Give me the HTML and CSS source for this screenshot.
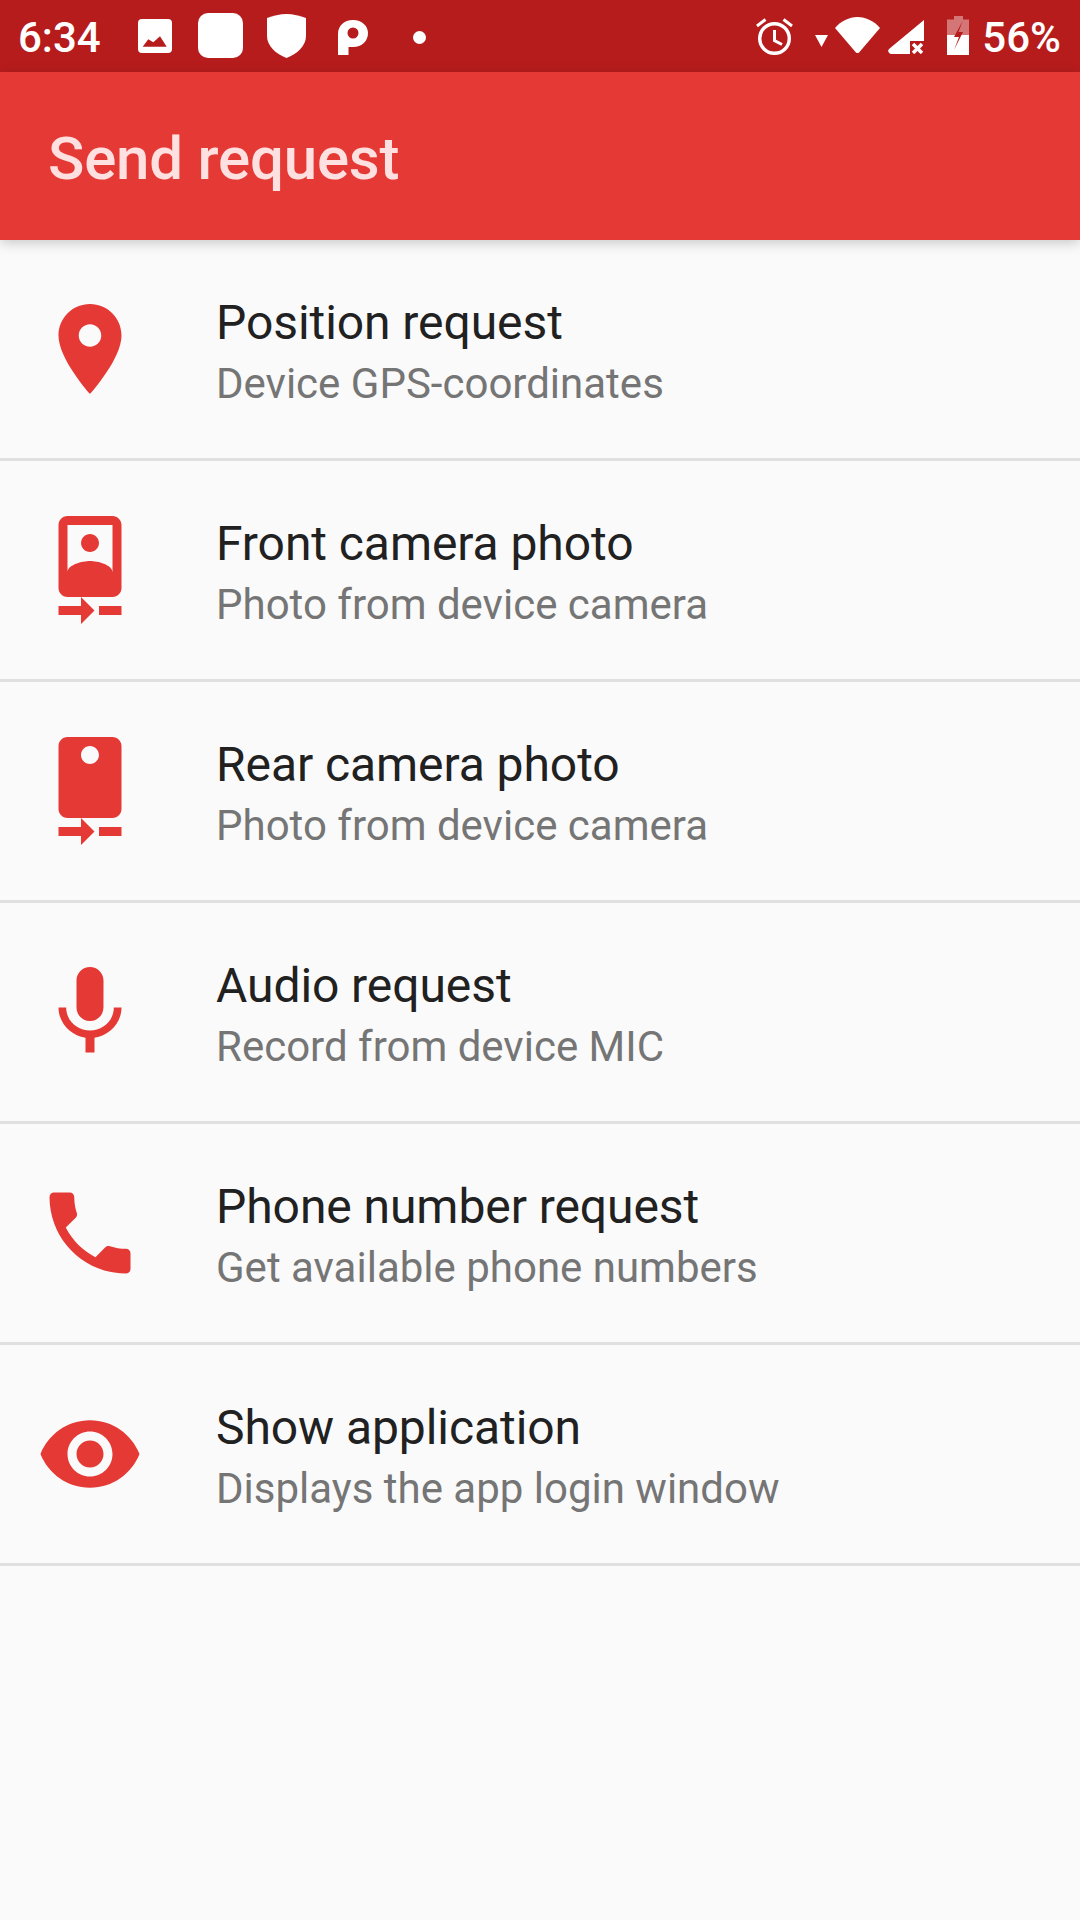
FILE: index.html
```html
<!DOCTYPE html>
<html lang="en">
<head>
<meta charset="utf-8">
<title>Send request</title>
<link rel="stylesheet" href="styles.css">
</head>
<body>
<div class="screen">
  <header class="status">
    <div class="status-left">
      <span class="time">6:34</span>
      <svg class="si si-image" viewBox="0 0 34 34"><path fill="#fff" fill-rule="evenodd" d="M4 0h26a4 4 0 0 1 4 4v26a4 4 0 0 1-4 4H4a4 4 0 0 1-4-4V4a4 4 0 0 1 4-4zM4.700 27.700 10.300 20.300 15.300 23.300 22 17.300 28.700 27.700z"/></svg>
      <svg class="si si-square" viewBox="0 0 45 45"><rect width="45" height="45" rx="10" fill="#fff"/></svg>
      <svg class="si si-shield" viewBox="0 0 39 44"><path fill="#fff" d="M19.500 0C26 0 33 2 39 4V22C39 32 30 40 19.500 44 9 40 0 32 0 22V4C6 2 13 0 19.500 0z"/></svg>
      <svg class="si si-p" viewBox="0 0 30 35"><path fill="#fff" fill-rule="evenodd" d="M15 0C24 0 30 6 30 13 30 21 24 27 15 27H10.500V35H0V14C0 6 6 0 15 0zM15 7.500A5.500 5.500 0 1 0 15 18.500 5.500 5.500 0 1 0 15 7.500z"/></svg>
      <svg class="si si-dot" viewBox="0 0 13 13"><circle cx="6.500" cy="6.500" r="6.500" fill="#fff"/></svg>
    </div>
    <div class="status-right">
      <svg class="si si-alarm" viewBox="0 0 38 38"><g fill="none" stroke="#fff"><circle cx="18.500" cy="21.500" r="14.800" stroke-width="3.400"/><path stroke-width="3" d="M18.500 13v10.500L26 27.500M1 9l8.500-6.500M36 9l-8.500-6.500"/></g></svg>
      <svg class="si si-tri" viewBox="0 0 13 12"><path fill="#fff" d="M0 0h13L6.500 12z"/></svg>
      <svg class="si si-wifi" viewBox="0 0 45 36"><path fill="#fff" d="M0 11C6 4 14 0 22.500 0S39 4 45 11L24.500 35a2.700 2.700 0 0 1-4 0z"/></svg>
      <svg class="si si-signal" viewBox="0 0 36 34"><path fill="#fff" d="M36 0v21H22v13H3a3 3 0 0 1-2-5z"/><path stroke="#fff" stroke-width="3.500" d="M25 24l9 9M34 24l-9 9"/></svg>
      <svg class="si si-battery" viewBox="0 0 22 39"><path fill="#fff" fill-opacity=".4" d="M7 0h9v3.500h6V19H0V3.500h7z"/><path fill="#fff" d="M0 19h22v20H0z"/><path fill="#b71c1c" d="M15.700 5 7 21h5L7 34l9-18h-4.500z"/></svg>
      <span class="battery-text">56%</span>
    </div>
  </header>
  <div class="appbar"><h1 class="appbar-title">Send request</h1></div>
  <main class="list">
    <div class="row">
      <svg class="icon" viewBox="0 0 24 24"><path d="M12 2C8.130 2 5 5.130 5 9c0 5.250 7 13 7 13s7-7.750 7-13c0-3.870-3.130-7-7-7zm0 9.500c-1.380 0-2.500-1.120-2.500-2.500s1.120-2.500 2.500-2.500 2.500 1.120 2.500 2.500-1.120 2.500-2.500 2.500z"/></svg>
      <div class="text"><div class="title">Position request</div><div class="sub">Device GPS-coordinates</div></div>
    </div>
    <div class="row">
      <svg class="icon" viewBox="0 0 24 24"><path d="M10 20H5v2h5v2l3-3-3-3v2zm4 0v2h5v-2h-5zM12 8c1.100 0 2-.9 2-2s-.9-2-2-2-1.990.9-1.990 2S10.900 8 12 8zm5-8H7C5.900 0 5 .9 5 2v14c0 1.100.9 2 2 2h10c1.100 0 2-.9 2-2V2c0-1.100-.9-2-2-2zM7 2h10v10.500c0-1.670-3.330-2.500-5-2.500s-5 .83-5 2.500V2z"/></svg>
      <div class="text"><div class="title">Front camera photo</div><div class="sub">Photo from device camera</div></div>
    </div>
    <div class="row">
      <svg class="icon" viewBox="0 0 24 24"><path d="M10 20H5v2h5v2l3-3-3-3v2zm4 0v2h5v-2h-5zm3-20H7C5.900 0 5 .9 5 2v14c0 1.100.9 2 2 2h10c1.100 0 2-.9 2-2V2c0-1.100-.9-2-2-2zm-5 6c-1.110 0-2-.9-2-2s.89-2 1.990-2 2 .9 2 2C14 5.100 13.100 6 12 6z"/></svg>
      <div class="text"><div class="title">Rear camera photo</div><div class="sub">Photo from device camera</div></div>
    </div>
    <div class="row">
      <svg class="icon" viewBox="0 0 24 24"><path d="M12 14c1.660 0 2.990-1.340 2.990-3L15 5c0-1.660-1.340-3-3-3S9 3.340 9 5v6c0 1.660 1.340 3 3 3zm5.300-3c0 3-2.540 5.100-5.300 5.100S6.700 14 6.700 11H5c0 3.410 2.720 6.230 6 6.720V21h2v-3.280c3.280-.48 6-3.300 6-6.720h-1.700z"/></svg>
      <div class="text"><div class="title">Audio request</div><div class="sub">Record from device MIC</div></div>
    </div>
    <div class="row">
      <svg class="icon" viewBox="0 0 24 24"><path d="M6.620 10.790c1.440 2.830 3.760 5.140 6.590 6.590l2.200-2.200c.27-.27.67-.36 1.020-.24 1.120.37 2.330.57 3.570.57.55 0 1 .45 1 1V20c0 .55-.45 1-1 1-9.390 0-17-7.610-17-17 0-.55.45-1 1-1h3.500c.55 0 1 .45 1 1 0 1.250.2 2.450.57 3.570.11.35.03.74-.25 1.020l-2.200 2.200z"/></svg>
      <div class="text"><div class="title">Phone number request</div><div class="sub">Get available phone numbers</div></div>
    </div>
    <div class="row">
      <svg class="icon" viewBox="0 0 24 24"><path d="M12 4.500C7 4.500 2.730 7.610 1 12c1.730 4.390 6 7.500 11 7.500s9.270-3.110 11-7.500c-1.730-4.390-6-7.500-11-7.500zM12 17c-2.760 0-5-2.240-5-5s2.240-5 5-5 5 2.240 5 5-2.240 5-5 5zm0-8c-1.660 0-3 1.340-3 3s1.340 3 3 3 3-1.340 3-3-1.340-3-3-3z"/></svg>
      <div class="text"><div class="title">Show application</div><div class="sub">Displays the app login window</div></div>
    </div>
  </main>
</div>
</body>
</html>
```
FILE: styles.css
```css
* { box-sizing: border-box; }
html, body { margin: 0; padding: 0; }
body { font-family: Roboto, "Liberation Sans", sans-serif; background: #fafafa; }
.screen { width: 1080px; height: 1920px; overflow: hidden; background: #fafafa; }

.status { height: 72px; background: #b71c1c; color: #fff; display: flex; justify-content: space-between; align-items: center; padding: 0 19px 0 18px; }
.status-left, .status-right { display: flex; align-items: center; }
.time, .battery-text { font-size: 42px; line-height: 60px; font-weight: 500; }
.time { padding-top: 4px; }
.battery-text { padding-top: 4px; margin-left: 13px; }
.si { display: block; flex: none; }
.si-image { width: 34px; height: 34px; margin-left: 37px; }
.si-square { width: 45px; height: 45px; margin-left: 26px; margin-bottom: 1px; }
.si-shield { width: 39px; height: 44px; margin-left: 24px; }
.si-p { width: 30px; height: 35px; margin-left: 32px; margin-top: 3px; }
.si-dot { width: 13px; height: 13px; margin-left: 45px; margin-top: 3px; }
.si-alarm { width: 38px; height: 38px; }
.si-tri { width: 13px; height: 12px; margin-left: 21px; margin-top: 10px; }
.si-wifi { width: 45px; height: 36px; margin-left: 7px; margin-bottom: 2px; }
.si-signal { width: 36px; height: 34px; margin-left: 8px; margin-top: 2px; }
.si-battery { width: 22px; height: 39px; margin-left: 23px; margin-bottom: 1px; }

.appbar { height: 168px; background: #e53935; display: flex; align-items: center; padding: 6px 0 0 48px; box-shadow: 0 3px 12px rgba(0,0,0,.2); position: relative; }
.appbar-title { margin: 0; font-size: 60px; font-weight: 500; line-height: 80px; color: #ffe0e0; letter-spacing: -0.2px; }

.row { height: 221px; border-bottom: 3px solid #e0e0e0; display: flex; align-items: center; padding-left: 36px; }
.icon { width: 108px; height: 108px; flex: none; fill: #e53935; }
.text { margin-left: 72px; padding-top: 8px; }
.title { font-size: 48px; line-height: 61px; color: #212121; letter-spacing: -0.07px; }
.sub { font-size: 42px; line-height: 61px; color: #757575; }
```
